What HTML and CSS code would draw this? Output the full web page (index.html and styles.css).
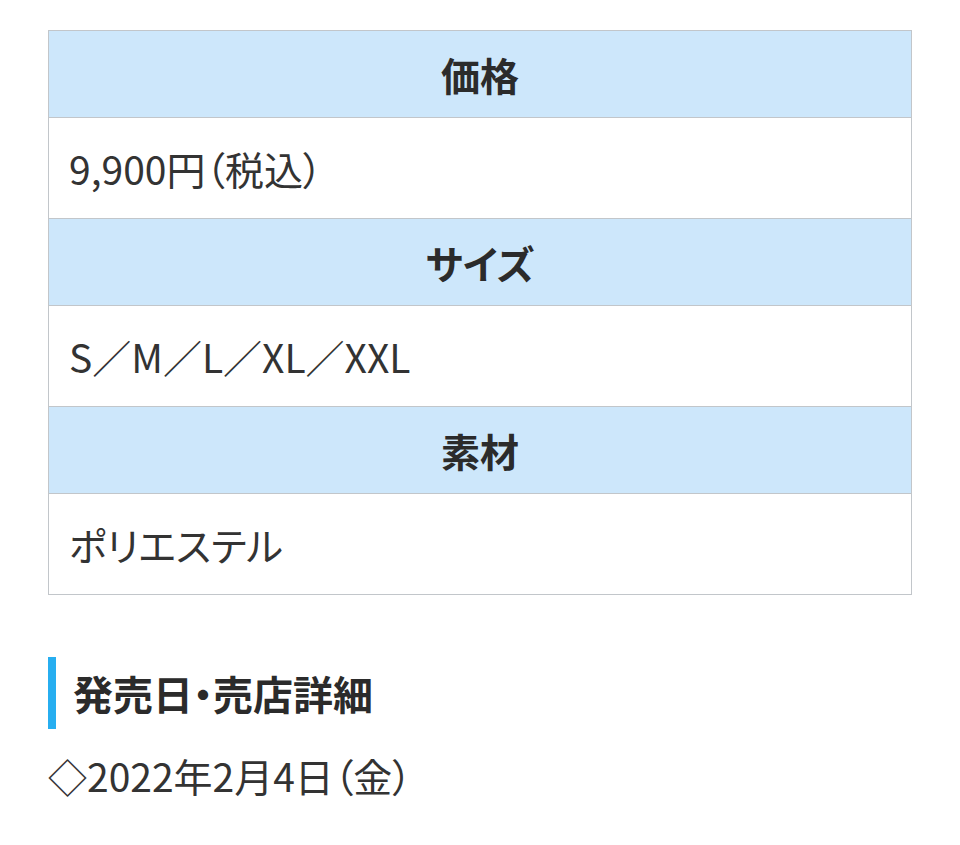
FILE: index.html
```html
<!DOCTYPE html>
<html lang="ja">
<head>
<meta charset="utf-8">
<link rel="stylesheet" href="styles.css">
</head>
<body>
<div class="page">
  <table class="spec">
    <tr><th>価格</th></tr>
    <tr><td>9,900円（税込）</td></tr>
    <tr><th>サイズ</th></tr>
    <tr><td>S／M／L／XL／XXL</td></tr>
    <tr><th>素材</th></tr>
    <tr><td>ポリエステル</td></tr>
  </table>
  <h2 class="heading">発売日・売店詳細</h2>
  <p class="date">◇2022年2月4日（金）</p>
</div>
</body>
</html>
```
FILE: styles.css
```css
html, body {
  margin: 0;
  padding: 0;
  background: #fff;
}
.page {
  padding: 30px 48px 0 48px;
  font-family: "Noto Sans CJK JP", "Noto Sans", sans-serif;
  color: #333;
  font-feature-settings: "palt";
}
.spec {
  width: 100%;
  border-collapse: collapse;
  font-size: 39px;
}
.spec th {
  background: #cde7fb;
  border: 1px solid #c2c6ca;
  height: 86px;
  padding: 0;
  font-weight: 700;
  text-align: center;
  color: #2b2b2b;
}
.spec td {
  border: 1px solid #c2c6ca;
  height: 100px;
  padding: 0 20px;
  font-weight: 400;
}
.heading {
  margin: 62px 0 0 0;
  border-left: 8px solid #27aef0;
  padding-left: 17px;
  height: 72px;
  display: flex;
  align-items: center;
  font-size: 40px;
  font-weight: 700;
  color: #2b2b2b;
}
.date {
  margin: 22px 0 0 0;
  font-size: 39px;
  line-height: 48px;
}
```
